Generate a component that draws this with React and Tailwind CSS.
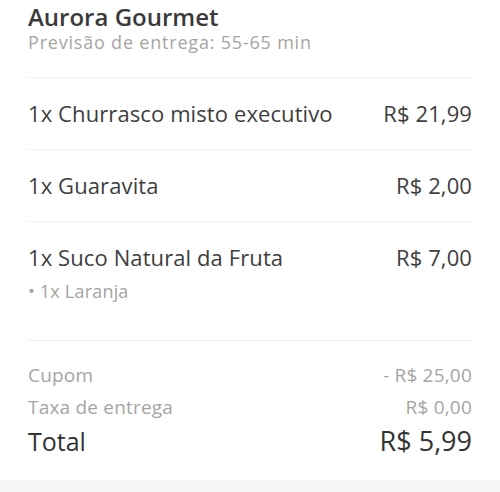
import React from 'react';

const itens = [
  { nome: '1x Churrasco misto executivo', preco: 'R$ 21,99' },
  { nome: '1x Guaravita', preco: 'R$ 2,00' },
  { nome: '1x Suco Natural da Fruta', preco: 'R$ 7,00', extras: ['1x Laranja'] },
];

const App = () => {
  return (
    <div className="w-[500px] h-[492px] bg-white flex flex-col font-['Open_Sans',sans-serif] text-[#3e3e3e]">
      <div className="px-[28px] flex-1">
        {/* cabeçalho da loja */}
        <div className="pb-[26px] border-b border-[#f2f1ec]">
          <h1 className="text-[24px] leading-[33px] font-semibold text-[#3a3a3a]">Aurora Gourmet</h1>
          <p className="text-[18px] leading-[18px] tracking-[0.8px] text-[#a6a5a3]">Previsão de entrega: 55-65 min</p>
        </div>

        {itens.map((item) => (
          <div
            key={item.nome}
            className={`pt-[21px] border-b border-[#f2f1ec] ${item.extras ? 'pb-[37px]' : 'pb-[22px]'}`}
          >
            <div className="flex justify-between text-[22px] leading-[28px] tracking-[0.1px]">
              <span>{item.nome}</span>
              <span>{item.preco}</span>
            </div>
            {item.extras && item.extras.map((extra) => (
              <div key={extra} className="mt-[8px] text-[18px] leading-[24px] tracking-[0.2px] text-[#a6a5a3]">
                • {extra}
              </div>
            ))}
          </div>
        ))}

        {/* resumo */}
        <div className="pt-[18px]">
          <div className="flex justify-between text-[19px] leading-[32px] tracking-[0.2px] text-[#a6a5a3]">
            <span>Cupom</span>
            <span>- R$ 25,00</span>
          </div>
          <div className="flex justify-between text-[19px] leading-[32px] tracking-[0.2px] text-[#a6a5a3]">
            <span>Taxa de entrega</span>
            <span>R$ 0,00</span>
          </div>
          <div className="flex justify-between items-baseline h-[36px] text-[#333333]">
            <span className="text-[25px] leading-[36px]">Total</span>
            <span className="text-[27px] leading-[36px]">R$ 5,99</span>
          </div>
        </div>
      </div>
      <div className="h-[12px] bg-[#f5f5f5]" />
    </div>
  );
};

export default App;
